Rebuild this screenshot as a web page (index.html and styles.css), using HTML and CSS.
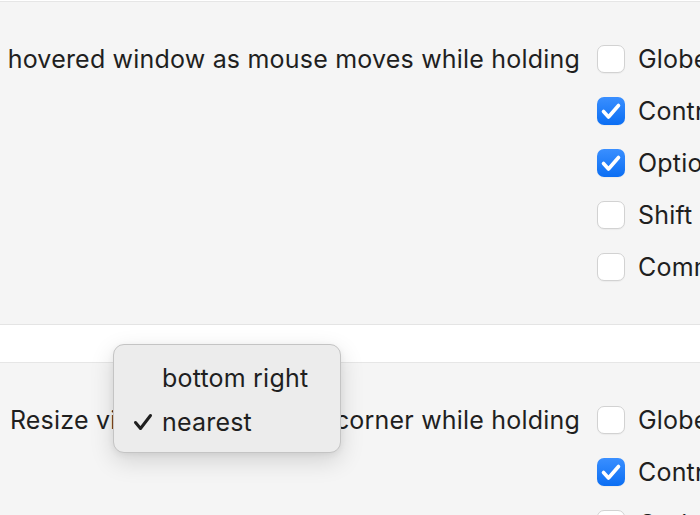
FILE: index.html
```html
<!DOCTYPE html>
<html>
<head>
<meta charset="utf-8">
<link rel="stylesheet" href="styles.css">
</head>
<body>
<div class="page">
  <section class="group group-move">
    <div class="setting">
      <div class="label"><span>Move the hovered window as mouse moves while holding</span></div>
      <ul class="options">
        <li class="option"><span class="check"></span><span class="name">Globe</span></li>
        <li class="option"><span class="check on"><svg viewBox="0 0 28 28"><path d="M6.5 14.5 L11.5 20 L21.5 8.5"/></svg></span><span class="name">Control</span></li>
        <li class="option"><span class="check on"><svg viewBox="0 0 28 28"><path d="M6.5 14.5 L11.5 20 L21.5 8.5"/></svg></span><span class="name">Option</span></li>
        <li class="option"><span class="check"></span><span class="name">Shift</span></li>
        <li class="option"><span class="check"></span><span class="name">Command</span></li>
      </ul>
    </div>
  </section>
  <div class="spacer"></div>
  <section class="group group-resize">
    <div class="setting">
      <div class="label"><span>Resize via <span class="popup-btn">nearest</span>corner while holding</span></div>
      <ul class="options">
        <li class="option"><span class="check"></span><span class="name">Globe</span></li>
        <li class="option"><span class="check on"><svg viewBox="0 0 28 28"><path d="M6.5 14.5 L11.5 20 L21.5 8.5"/></svg></span><span class="name">Control</span></li>
        <li class="option"><span class="check"></span><span class="name">Option</span></li>
      </ul>
    </div>
    <div class="menu">
      <div class="menu-item"><span class="tick"></span>bottom right</div>
      <div class="menu-item"><span class="tick"><svg viewBox="0 0 20 18"><path d="M2.5 9.5 L7.5 15.5 L17.5 2.5"/></svg></span>nearest</div>
    </div>
  </section>
</div>
</body>
</html>
```

FILE: styles.css
```css
* { box-sizing: border-box; }
html, body { margin: 0; padding: 0; }
body {
  background: #ffffff;
  font-family: "Inter", "Liberation Sans", sans-serif;
  font-size: 25px;
  letter-spacing: 0.2px;
  color: #1f1f1f;
  overflow: hidden;
}
.page {
  width: 700px;
  height: 515px;
  overflow: hidden;
  padding-top: 1px;
}
.group {
  background: #f5f5f5;
  border-top: 1px solid #e6e6e6;
  border-bottom: 1px solid #e4e4e4;
  position: relative;
}
.group-move { padding: 43px 0 43px; }
.group-resize { padding: 43px 0 0; border-bottom: none; height: 200px; }
.spacer { height: 37px; background: #ffffff; }
.setting {
  display: grid;
  grid-template-columns: 580px auto;
  column-gap: 17px;
  align-items: start;
}
.label {
  display: flex;
  justify-content: flex-end;
  height: 28px;
  align-items: center;
  white-space: nowrap;
  min-width: 0;
}
.label > span { flex: none; }
.popup-btn { display: inline-block; width: 197px; color: transparent; }
.options {
  list-style: none;
  margin: 0;
  padding: 0;
  display: flex;
  flex-direction: column;
  gap: 24px;
}
.option {
  display: flex;
  align-items: center;
  gap: 13px;
  height: 28px;
  white-space: nowrap;
}
.check {
  flex: none;
  width: 28px;
  height: 28px;
  border-radius: 7px;
  background: #ffffff;
  border: 1px solid #d2d2d2;
  box-shadow: 0 1px 1px rgba(0,0,0,0.04);
  display: flex;
}
.check.on {
  border: none;
  background: linear-gradient(#3a8fff, #0b6ef3);
}
.check svg { width: 28px; height: 28px; }
.check path {
  fill: none;
  stroke: #ffffff;
  stroke-width: 3.6;
  stroke-linecap: round;
  stroke-linejoin: round;
}
.menu {
  position: absolute;
  left: 113px;
  top: -19px;
  width: 228px;
  height: 109px;
  background: #ececec;
  border: 1px solid #c4c4c4;
  border-radius: 11px;
  box-shadow: 0 8px 24px rgba(0,0,0,0.14), 0 2px 6px rgba(0,0,0,0.06);
  padding: 19px 0 0;
  display: flex;
  flex-direction: column;
  gap: 16px;
}
.menu-item {
  display: flex;
  align-items: center;
  height: 28px;
  padding-left: 19px;
  white-space: nowrap;
}
.tick {
  width: 29px;
  height: 18px;
  display: flex;
}
.tick svg { width: 20px; height: 18px; }
.tick path {
  fill: none;
  stroke: #1f1f1f;
  stroke-width: 3;
  stroke-linecap: round;
  stroke-linejoin: round;
}
```
